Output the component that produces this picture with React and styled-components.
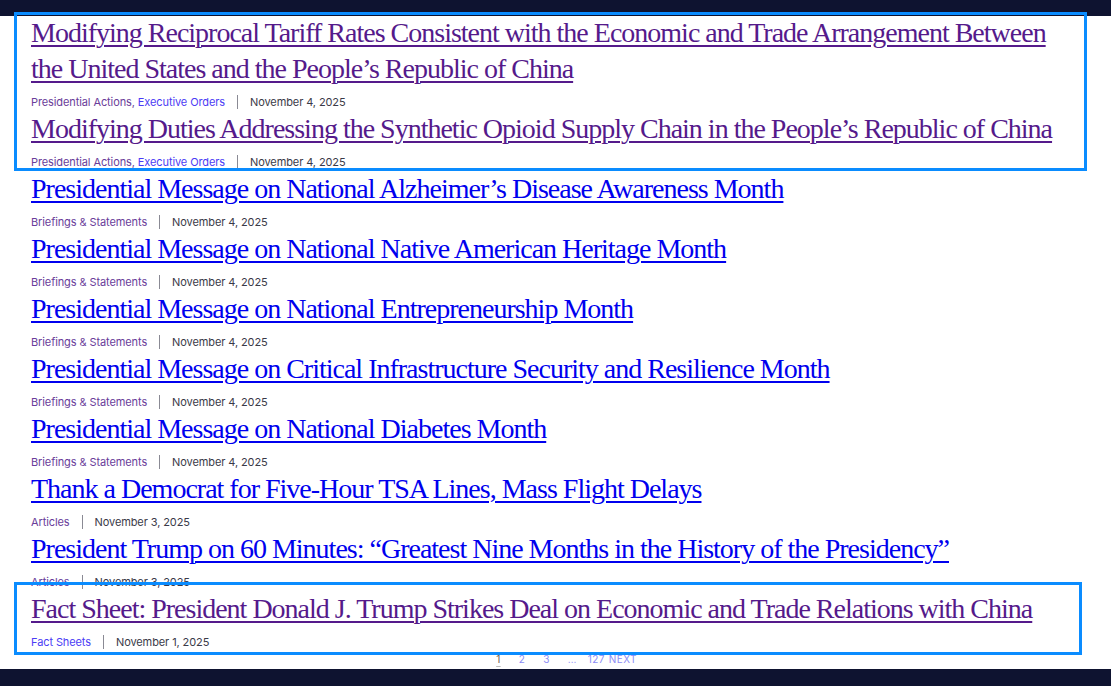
import React from "react";
import styled, { createGlobalStyle } from "styled-components";

const GlobalStyle = createGlobalStyle`
  html, body {
    margin: 0;
    padding: 0;
    background: #ffffff;
  }
  body {
    font-family: Inter, "Liberation Sans", sans-serif;
  }
`;

const Page = styled.div`
  position: relative;
  display: flex;
  flex-direction: column;
  height: 686px;
  overflow: hidden;
`;

const DarkBar = styled.div`
  flex: 0 0 ${(p) => p.$height}px;
  background: #0e1330;
`;

const Main = styled.main`
  flex: 1;
  overflow: hidden;
  display: flex;
  flex-direction: column;
`;

const List = styled.ul`
  list-style: none;
  margin: -1px 0 0;
  padding: 0 0 0 31px;
  width: 1040px;
`;

const Item = styled.li`
  display: flex;
  flex-direction: column;
`;

const Title = styled.a`
  font-family: "Liberation Serif", "Times New Roman", serif;
  font-size: 28px;
  line-height: 36px;
  letter-spacing: -1px;
  color: ${(p) => (p.$visited ? "#551a8b" : "#0000ee")};
  text-decoration: underline;
  text-decoration-thickness: 2px;
  text-underline-offset: 3px;
`;

const Meta = styled.div`
  display: flex;
  align-items: center;
  height: 24px;
  padding-top: 6px;
  box-sizing: border-box;
  font-size: 11px;
  line-height: 18px;
  letter-spacing: -0.1px;
  color: #3a3a48;
`;

const Categories = styled.span`
  white-space: nowrap;
`;

const Category = styled.a`
  color: ${(p) => (p.$visited ? "#6a3d9a" : "#4b3cf5")};
  text-decoration: none;
`;

const Comma = styled.span`
  color: #6a3d9a;
`;

const Divider = styled.span`
  width: 1px;
  height: 14px;
  margin: 0 12px;
  background: #8a8a94;
`;

const Pagination = styled.nav`
  display: flex;
  justify-content: center;
  gap: 18px;
  padding-left: 22px;
  height: 16px;
  align-items: center;
  font-size: 10px;
  letter-spacing: 0.4px;
`;

const PageLink = styled.a`
  color: ${(p) => (p.$current ? "#6d5a48" : "#8c8cf5")};
  text-decoration: ${(p) => (p.$current ? "underline" : "none")};
  text-decoration-color: #bbbbbb;
  text-underline-offset: 3px;
  margin-left: ${(p) => p.$pull || 0}px;
`;

const Highlight = styled.div`
  position: absolute;
  left: ${(p) => p.$left}px;
  top: ${(p) => p.$top}px;
  width: ${(p) => p.$width}px;
  height: ${(p) => p.$height}px;
  border: 3px solid #0a8cff;
  box-sizing: border-box;
  pointer-events: none;
`;

const posts = [
  {
    title:
      "Modifying Reciprocal Tariff Rates Consistent with the Economic and Trade Arrangement Between the United States and the People’s Republic of China",
    visited: true,
    cats: [
      ["Presidential Actions", true],
      ["Executive Orders", false],
    ],
    date: "November 4, 2025",
  },
  {
    title:
      "Modifying Duties Addressing the Synthetic Opioid Supply Chain in the People’s Republic of China",
    visited: true,
    cats: [
      ["Presidential Actions", true],
      ["Executive Orders", false],
    ],
    date: "November 4, 2025",
  },
  {
    title: "Presidential Message on National Alzheimer’s Disease Awareness Month",
    cats: [["Briefings & Statements", true]],
    date: "November 4, 2025",
  },
  {
    title: "Presidential Message on National Native American Heritage Month",
    cats: [["Briefings & Statements", true]],
    date: "November 4, 2025",
  },
  {
    title: "Presidential Message on National Entrepreneurship Month",
    cats: [["Briefings & Statements", true]],
    date: "November 4, 2025",
  },
  {
    title: "Presidential Message on Critical Infrastructure Security and Resilience Month",
    cats: [["Briefings & Statements", true]],
    date: "November 4, 2025",
  },
  {
    title: "Presidential Message on National Diabetes Month",
    cats: [["Briefings & Statements", true]],
    date: "November 4, 2025",
  },
  {
    title: "Thank a Democrat for Five-Hour TSA Lines, Mass Flight Delays",
    cats: [["Articles", true]],
    date: "November 3, 2025",
  },
  {
    title: "President Trump on 60 Minutes: “Greatest Nine Months in the History of the Presidency”",
    cats: [["Articles", true]],
    date: "November 3, 2025",
  },
  {
    title: "Fact Sheet: President Donald J. Trump Strikes Deal on Economic and Trade Relations with China",
    visited: true,
    cats: [["Fact Sheets", false]],
    date: "November 1, 2025",
  },
];

export default function App() {
  return (
    <>
      <GlobalStyle />
      <Page>
        <DarkBar $height={16} />
        <Main>
          <List>
            {posts.map((post) => (
              <Item key={post.title}>
                <div>
                  <Title href="#" $visited={post.visited}>
                    {post.title}
                  </Title>
                </div>
                <Meta>
                  <Categories>
                    {post.cats.map(([name, visited], i) => (
                      <React.Fragment key={name}>
                        {i > 0 && <Comma>, </Comma>}
                        <Category href="#" $visited={visited}>
                          {name}
                        </Category>
                      </React.Fragment>
                    ))}
                  </Categories>
                  <Divider />
                  <span>{post.date}</span>
                </Meta>
              </Item>
            ))}
          </List>
          <Pagination>
            <PageLink href="#" $current>1</PageLink>
            <PageLink href="#">2</PageLink>
            <PageLink href="#">3</PageLink>
            <PageLink as="span">…</PageLink>
            <PageLink href="#" $pull={-7}>127</PageLink>
            <PageLink href="#" $pull={-14}>NEXT</PageLink>
          </Pagination>
        </Main>
        <DarkBar $height={17} />
        <Highlight $left={14} $top={12} $width={1073} $height={159} />
        <Highlight $left={14} $top={582} $width={1068} $height={73} />
      </Page>
    </>
  );
}
